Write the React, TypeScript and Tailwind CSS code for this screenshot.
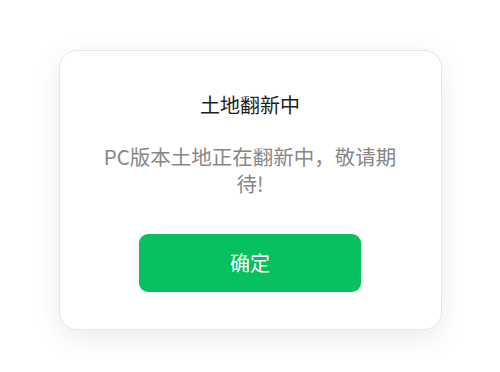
import React from 'react';

const App: React.FC = () => {
  return (
    <div className="min-h-screen w-full bg-white flex justify-center pt-[50px] font-['Noto_Sans_CJK_SC','Noto_Sans',sans-serif]">
      <div className="w-[383px] h-[280px] bg-white rounded-[18px] border border-[#e6e6e6] shadow-[0_8px_28px_rgba(0,0,0,0.08)] pt-10 flex flex-col items-center">
        <h2 className="text-[20px] leading-[28px] text-[#1c1c1c] font-normal">土地翻新中</h2>
        <p className="mt-6 w-[300px] text-[20.5px] leading-[27px] text-[#878787] text-center">PC版本土地正在翻新中，敬请期待!</p>
        <button className="mt-[37px] w-[222px] h-[58px] rounded-[9px] bg-[#07c160] text-white text-[20px] leading-none">确定</button>
      </div>
    </div>
  );
};

export default App;
